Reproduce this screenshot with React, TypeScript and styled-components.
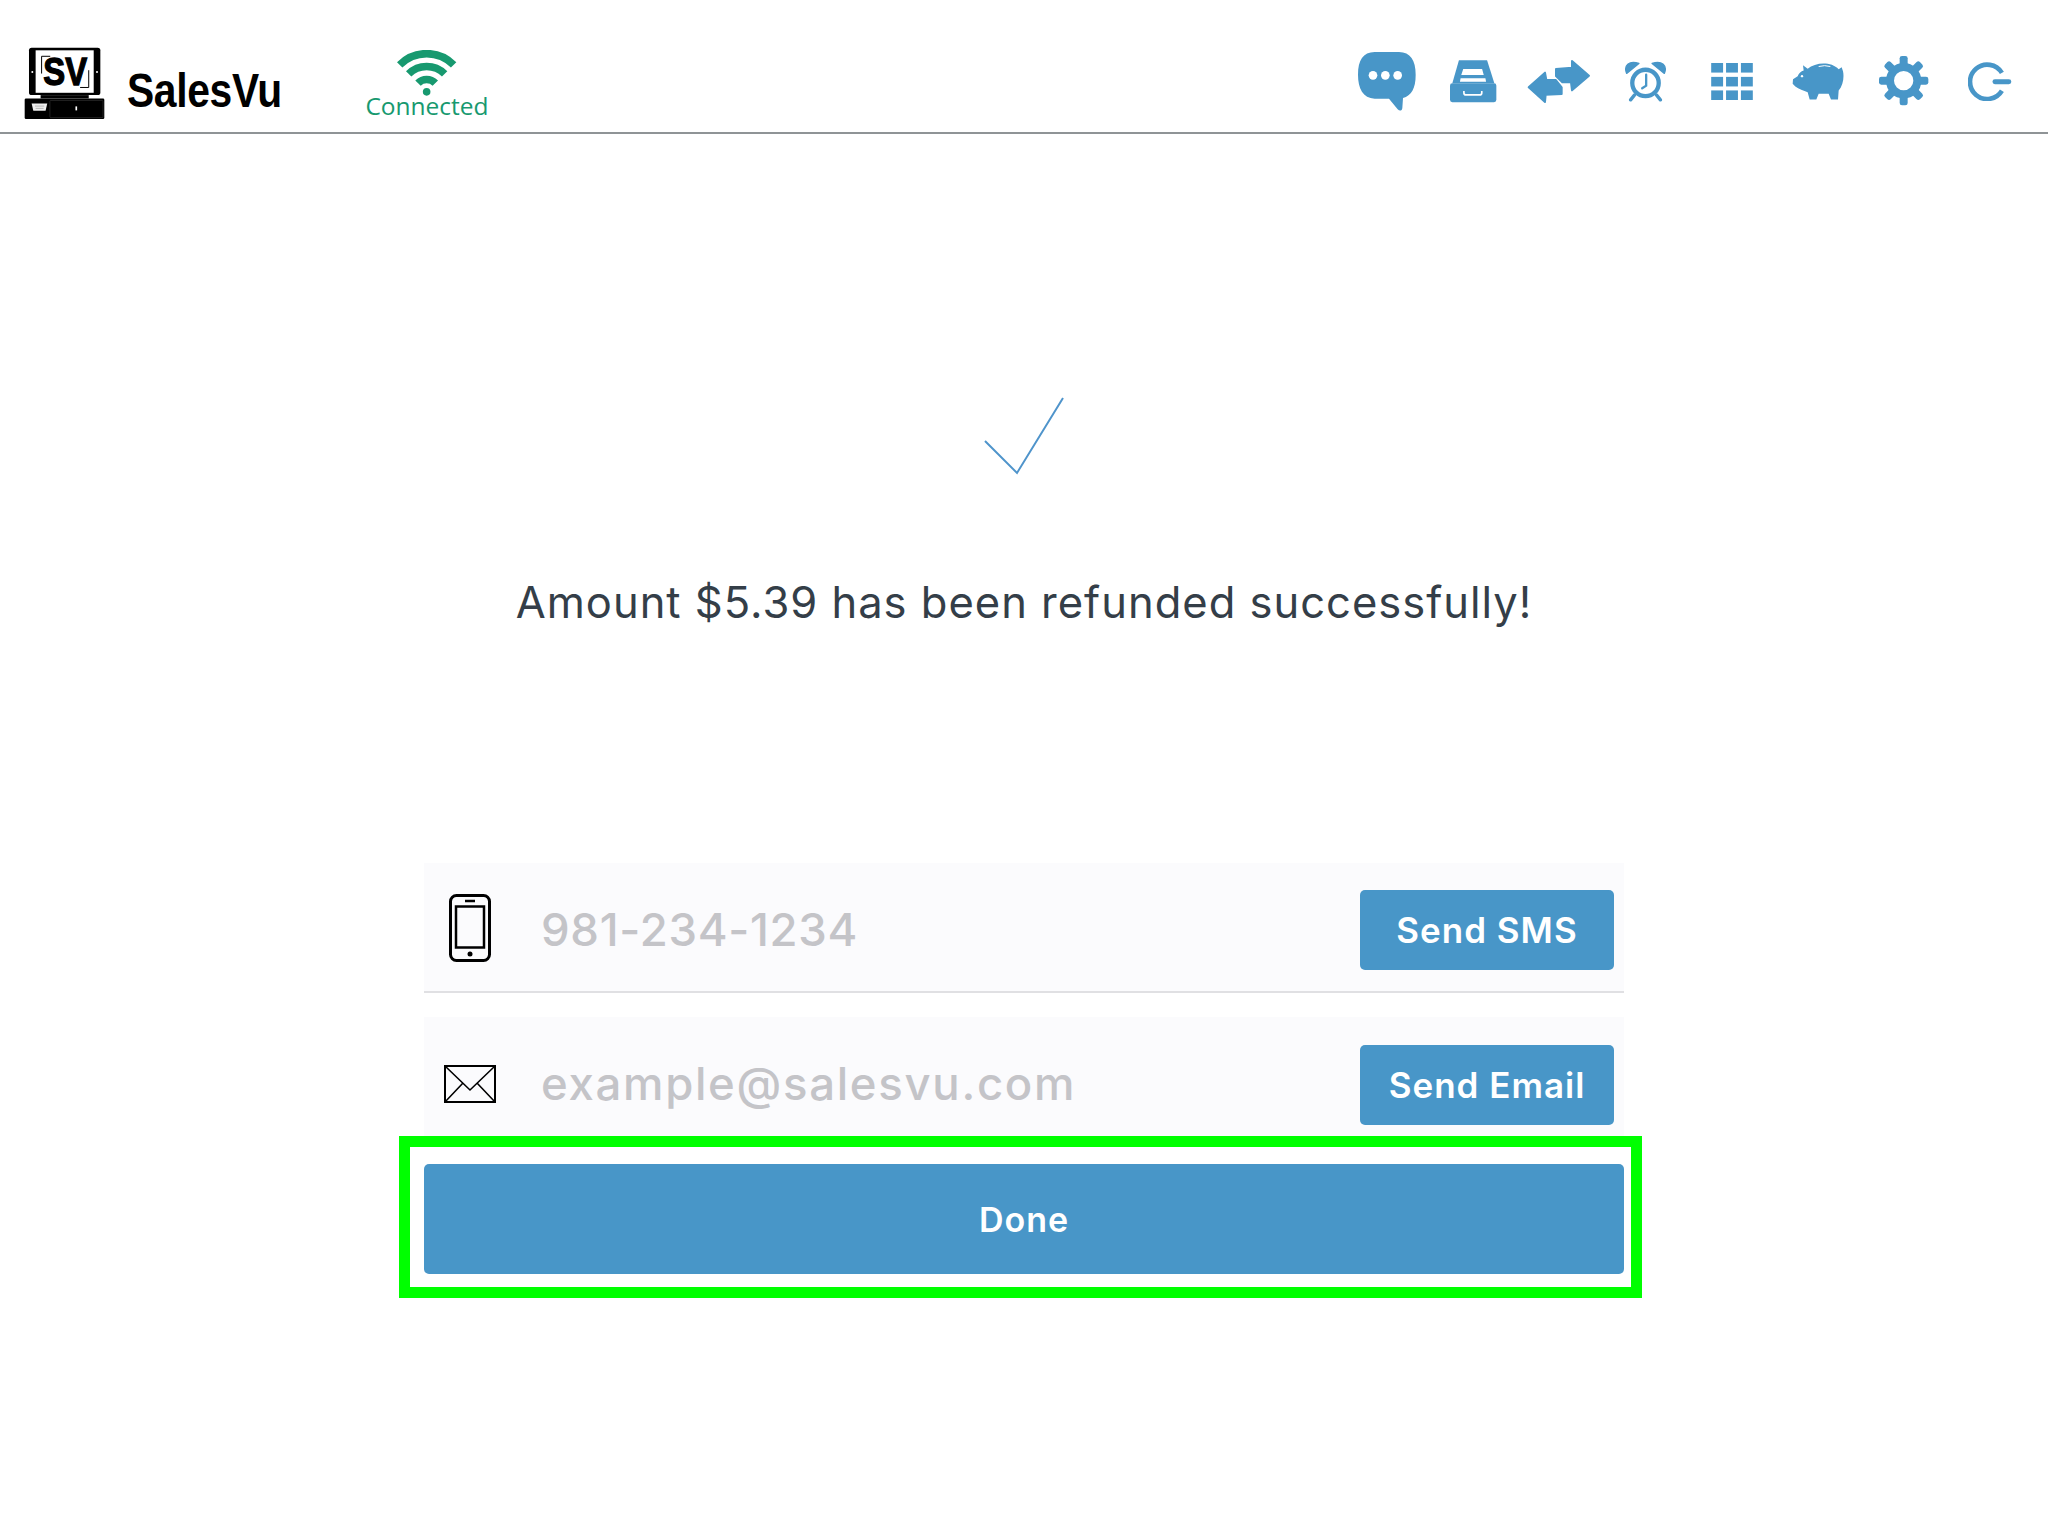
import React from 'react'
import styled, { createGlobalStyle } from 'styled-components'

const GlobalStyle = createGlobalStyle`
  html, body {
    margin: 0;
    padding: 0;
    background: #ffffff;
    font-family: "Inter", "Open Sans", sans-serif;
  }
  * { box-sizing: border-box; }
`

const blue = '#4896c8'

const Page = styled.div`
  width: 2048px;
  min-height: 1536px;
  background: #fff;
`

const Header = styled.header`
  display: flex;
  align-items: flex-start;
  height: 134px;
  border-bottom: 2px solid #8f9496;
`

const Brand = styled.div`
  display: flex;
  align-items: flex-start;
  width: 362px;
  padding: 47px 0 0 24px;
`

const BrandName = styled.span`
  display: block;
  margin: 20px 0 0 22px;
  font-family: "Liberation Sans", sans-serif;
  font-size: 48px;
  line-height: 48px;
  font-weight: 700;
  letter-spacing: -0.4px;
  color: #000;
  transform: scaleX(0.85);
  transform-origin: left center;
`

const Status = styled.div`
  display: flex;
  flex-direction: column;
  align-items: center;
  width: 130px;
  margin-top: 50px;
  color: #17996f;
`

const StatusLabel = styled.span`
  font-family: "Open Sans", sans-serif;
  font-size: 24.5px;
  line-height: 26px;
  margin-top: -3px;
`

const Toolbar = styled.nav`
  display: flex;
  align-items: center;
  height: 60px;
  margin: 51px 14.5px 0 auto;
`

const ToolSlot = styled.a`
  display: flex;
  justify-content: center;
  align-items: center;
  width: 86.2px;
  height: 60px;
  color: ${blue};
`

const Main = styled.main`
  display: flex;
  flex-direction: column;
  align-items: center;
  padding-top: 262px;
`

const CheckMark = styled.svg`
  display: block;
  width: 80px;
  height: 80px;
  fill: none;
  stroke: #4f94cb;
  stroke-width: 2;
`

const Message = styled.p`
  margin: 98px 0 0;
  font-size: 43.5px;
  line-height: 56px;
  letter-spacing: 1px;
  font-weight: 400;
  color: #343e48;
`

const Form = styled.div`
  width: 1200px;
  margin-top: 233px;
`

const Row = styled.div<{ $top: number; $bottom: number; $line?: boolean }>`
  display: flex;
  align-items: center;
  padding: ${(p) => p.$top}px 10px ${(p) => p.$bottom}px 0;
  margin-bottom: ${(p) => (p.$line ? 24 : 0)}px;
  background: #fbfbfd;
  border-bottom: ${(p) => (p.$line ? '2px solid #e0e0e3' : 'none')};
`

const FieldIcon = styled.div<{ $lift: number }>`
  display: flex;
  justify-content: center;
  width: 92px;
  margin: 0 25px ${(p) => p.$lift}px 0;
  color: #000;
`

const Placeholder = styled.span<{ $tracking: number; $lift: number }>`
  flex: 1;
  margin-bottom: ${(p) => p.$lift}px;
  font-size: 45.5px;
  line-height: 56px;
  font-weight: 500;
  letter-spacing: ${(p) => p.$tracking}px;
  color: #c4c4c8;
`

const SendButton = styled.button`
  width: 254px;
  height: 80px;
  border: 0;
  border-radius: 5px;
  background: ${blue};
  color: #fff;
  font-family: inherit;
  font-size: 35px;
  font-weight: 600;
  letter-spacing: 1px;
`

const DoneArea = styled.div`
  position: relative;
  margin-top: 28px;
`

const DoneButton = styled.button`
  display: block;
  width: 100%;
  height: 110px;
  border: 0;
  border-radius: 5px;
  background: ${blue};
  color: #fff;
  font-family: inherit;
  font-size: 34px;
  font-weight: 600;
  letter-spacing: 1px;
`

// green highlight drawn over the button
const HighlightFrame = styled.div`
  position: absolute;
  top: -28px;
  right: -18px;
  bottom: -24px;
  left: -25px;
  border: 11px solid #00ff00;
  pointer-events: none;
`

const Logo = () => (
  <svg width="81" height="73" viewBox="26 20 242 220">
    <rect x="40" y="22" width="215" height="143" rx="8" fill="#000" />
    <rect x="60" y="30" width="175" height="128" fill="#fff" />
    <path d="M78 100V48H104M220 90V142H194" fill="none" stroke="#000" strokeWidth="3" />
    <text x="149" y="136" textAnchor="middle" textLength="132" lengthAdjust="spacingAndGlyphs" fontFamily="Liberation Sans, sans-serif" fontWeight="700" fontSize="118" stroke="#000" strokeWidth="4" fill="#000">SV</text>
    <circle cx="50" cy="95" r="3" fill="#fff" />
    <circle cx="245" cy="95" r="3" fill="#fff" />
    <rect x="75" y="165" width="145" height="10" fill="#000" />
    <rect x="27" y="175" width="240" height="62" rx="4" fill="#000" />
    <rect x="103" y="181" width="160" height="52" rx="3" fill="#000" stroke="#333" strokeWidth="2" />
    <path d="M48 190H95L90 212H53Z" fill="#eee" />
    <path d="M58 198H86M60 205H84" stroke="#999" strokeWidth="2" />
    <rect x="180" y="199" width="5" height="12" fill="#fff" />
  </svg>
)

const Wifi = () => (
  <svg width="60" height="46" viewBox="1155 92 172 133" fill="none" stroke="currentColor" strokeWidth="22">
    <path d="M1162 135A110 110 0 0 1 1318 135" />
    <path d="M1188 161A74 74 0 0 1 1292 161" />
    <path d="M1215 188A35 35 0 0 1 1265 188" />
    <circle cx="1240" cy="213" r="11" fill="currentColor" stroke="none" />
  </svg>
)

const ChatIcon = () => (
  <svg width="58" height="59" viewBox="55 70 174 177" fill="currentColor">
    <path d="M105 70H178C212 70 228 95 228 138C228 180 215 200 190 208L188 238C187 247 180 248 174 242L148 210H105C70 208 55 180 55 138C55 95 70 70 105 70Z" />
    <circle cx="100" cy="140" r="13" fill="#fff" />
    <circle cx="137" cy="140" r="13" fill="#fff" />
    <circle cx="174" cy="140" r="13" fill="#fff" />
  </svg>
)

const DrawerIcon = () => (
  <svg width="47" height="44" viewBox="328 82 142 132" fill="currentColor">
    <path d="M355 85H440L462 155H335Z" />
    <path d="M368 112H425L430 130H362ZM360 140H435L437 150H358Z" fill="#fff" />
    <rect x="328" y="155" width="140" height="57" rx="7" />
    <path d="M370 178V184Q370 190 376 190H418Q424 190 424 184V178" fill="none" stroke="#fff" strokeWidth="5" />
  </svg>
)

const SwapIcon = () => (
  <svg width="64" height="44" viewBox="562 90 192 132" fill="currentColor" stroke="currentColor" strokeWidth="6" strokeLinejoin="round">
    <path d="M649 120L697 116V96L748 140L697 184L694 160H668L649 141Z" />
    <path d="M567 175L616 131L620 153H648L666 175V195L618 197L616 219Z" />
  </svg>
)

const ClockIcon = () => (
  <svg width="43" height="42" viewBox="40 28 130 126" fill="currentColor">
    <circle cx="105" cy="97" r="40" fill="none" stroke="currentColor" strokeWidth="13" />
    <path d="M48 68C38 45 55 28 85 38ZM162 68C172 45 155 28 125 38Z" stroke="currentColor" strokeWidth="4" strokeLinejoin="round" />
    <path d="M107 72V105L95 113" fill="none" stroke="currentColor" strokeWidth="7" strokeLinecap="round" />
    <path d="M72 133L60 148M138 133L150 148" fill="none" stroke="currentColor" strokeWidth="10" strokeLinecap="round" />
  </svg>
)

const GridIcon = () => {
  const cells = [60, 105, 150].flatMap((x) => [98, 140, 181].map((y) => ({ x, y })))
  return (
    <svg width="42" height="37" viewBox="60 98 126 112" fill="currentColor">
      {cells.map((c) => (
        <rect key={`${c.x}-${c.y}`} x={c.x} y={c.y} width="36" height="29" />
      ))}
    </svg>
  )
}

const PiggyIcon = () => (
  <svg width="52" height="39" viewBox="305 95 156 116" fill="currentColor">
    <path d="M338 104L352 115C375 95 422 92 445 116L454 110L458 122C462 140 458 165 445 180L443 207H422L415 190H385L378 207H358L352 185C340 181 325 176 315 168L307 160L308 146L322 137C326 128 332 122 340 120Z" />
    <circle cx="335" cy="137" r="3.5" fill="#fff" />
    <path d="M385 108Q403 103 420 108" fill="none" stroke="#fff" strokeWidth="3" />
  </svg>
)

const GearIcon = () => (
  <svg width="50" height="50" viewBox="565 85 150 150" fill="currentColor">
    <circle cx="639" cy="159" r="41" fill="none" stroke="currentColor" strokeWidth="24" />
    {[0, 45, 90, 135, 180, 225, 270, 315].map((deg) => (
      <rect key={deg} x="627" y="85" width="24" height="30" rx="7" transform={`rotate(${deg} 639 159)`} />
    ))}
  </svg>
)

const PowerIcon = () => (
  <svg width="44" height="39" viewBox="838 100 132 118" fill="none" stroke="currentColor">
    <path d="M940 133A52 52 0 1 0 940 187" strokeWidth="14" />
    <path d="M919 160H961" strokeWidth="15" strokeLinecap="round" />
  </svg>
)

const PhoneIcon = () => (
  <svg width="42" height="68" viewBox="0 0 42 68" fill="none" stroke="currentColor">
    <rect x="1.5" y="1.5" width="39" height="65" rx="6" strokeWidth="3" />
    <rect x="7" y="12.5" width="28" height="41" strokeWidth="2.5" />
    <path d="M16 7H26" strokeWidth="2.5" />
    <circle cx="21" cy="60" r="2.5" fill="currentColor" stroke="none" />
  </svg>
)

const MailIcon = () => (
  <svg width="52" height="38" viewBox="0 0 52 38" fill="none" stroke="currentColor">
    <rect x="1" y="1" width="50" height="36" strokeWidth="2" />
    <path d="M1 1L26 25L51 1M1 37L19 18M51 37L33 18" strokeWidth="1.6" />
  </svg>
)

const tools = [ChatIcon, DrawerIcon, SwapIcon, ClockIcon, GridIcon, PiggyIcon, GearIcon, PowerIcon]

const App = () => (
  <Page>
    <GlobalStyle />
    <Header>
      <Brand>
        <Logo />
        <BrandName>SalesVu</BrandName>
      </Brand>
      <Status>
        <Wifi />
        <StatusLabel>Connected</StatusLabel>
      </Status>
      <Toolbar>
        {tools.map((Tool, i) => (
          <ToolSlot key={i}>
            <Tool />
          </ToolSlot>
        ))}
      </Toolbar>
    </Header>
    <Main>
      <CheckMark viewBox="0 0 80 80">
        <path d="M1 45L33 77L79 2" />
      </CheckMark>
      <Message>Amount $5.39 has been refunded successfully!</Message>
      <Form>
        <Row $top={27} $bottom={21} $line>
          <FieldIcon $lift={4}>
            <PhoneIcon />
          </FieldIcon>
          <Placeholder $tracking={0.7} $lift={0}>981-234-1234</Placeholder>
          <SendButton>Send SMS</SendButton>
        </Row>
        <Row $top={28} $bottom={11}>
          <FieldIcon $lift={2}>
            <MailIcon />
          </FieldIcon>
          <Placeholder $tracking={1.7} $lift={3}>example@salesvu.com</Placeholder>
          <SendButton>Send Email</SendButton>
        </Row>
        <DoneArea>
          <DoneButton>Done</DoneButton>
          <HighlightFrame />
        </DoneArea>
      </Form>
    </Main>
  </Page>
)

export default App
